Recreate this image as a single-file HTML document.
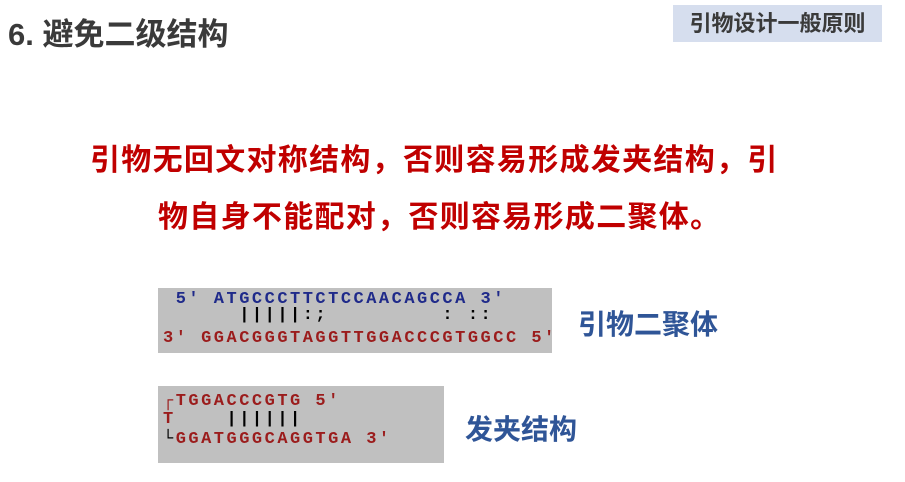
<!DOCTYPE html>
<html><head><meta charset="utf-8"><style>
body{margin:0;width:905px;height:482px;background:#fff;position:relative;overflow:hidden;font-family:"Liberation Sans","Noto Sans CJK SC",sans-serif}
.a{position:absolute;white-space:pre}
.h{left:8px;top:9px;font-size:31px;font-weight:bold;color:#3a3a3a}
.tag{left:673px;top:5px;width:209px;height:37px;background:#d6deee;color:#3a3a3a;font-size:22px;font-weight:bold;line-height:37px;text-align:center}
.r{font-size:30px;font-weight:bold;color:#c00000;letter-spacing:1.3px}
.box{background:#c0c0c0}
.m{font-family:"Liberation Mono",monospace;font-size:17px;letter-spacing:2.5px;line-height:17px;font-weight:bold}
.b{color:#1f2a8a}.d{color:#9b1c1c}.k{color:#000;font-weight:bold}
.l{font-size:28px;font-weight:bold;color:#2f5597}
</style></head><body>
<div class="a h">6. 避免二级结构</div>
<div class="a tag">引物设计一般原则</div>
<div class="a r" style="left:90px;top:135px">引物无回文对称结构，否则容易形成发夹结构，引</div>
<div class="a r" style="left:158px;top:192px">物自身不能配对，否则容易形成二聚体。</div>
<div class="a box" style="left:158px;top:288px;width:394px;height:65px"></div>
<div class="a m b" style="left:163px;top:291px"> 5' ATGCCCTTCTCCAACAGCCA 3'</div>
<div class="a m k" style="left:163px;top:307px">      |||||:;         : ::</div>
<div class="a m d" style="left:163px;top:330px">3' GGACGGGTAGGTTGGACCCGTGGCC 5'</div>
<div class="a l" style="left:578px;top:303px">引物二聚体</div>
<div class="a box" style="left:158px;top:386px;width:286px;height:77px"></div>
<div class="a m d" style="left:163px;top:393px">┌TGGACCCGTG 5'</div>
<div class="a m d" style="left:163px;top:411px">T    <span class="k">||||||</span></div>
<div class="a m d" style="left:163px;top:431px"><span class="k">└</span>GGATGGGCAGGTGA 3'</div>
<div class="a l" style="left:465px;top:408px">发夹结构</div>
</body></html>
